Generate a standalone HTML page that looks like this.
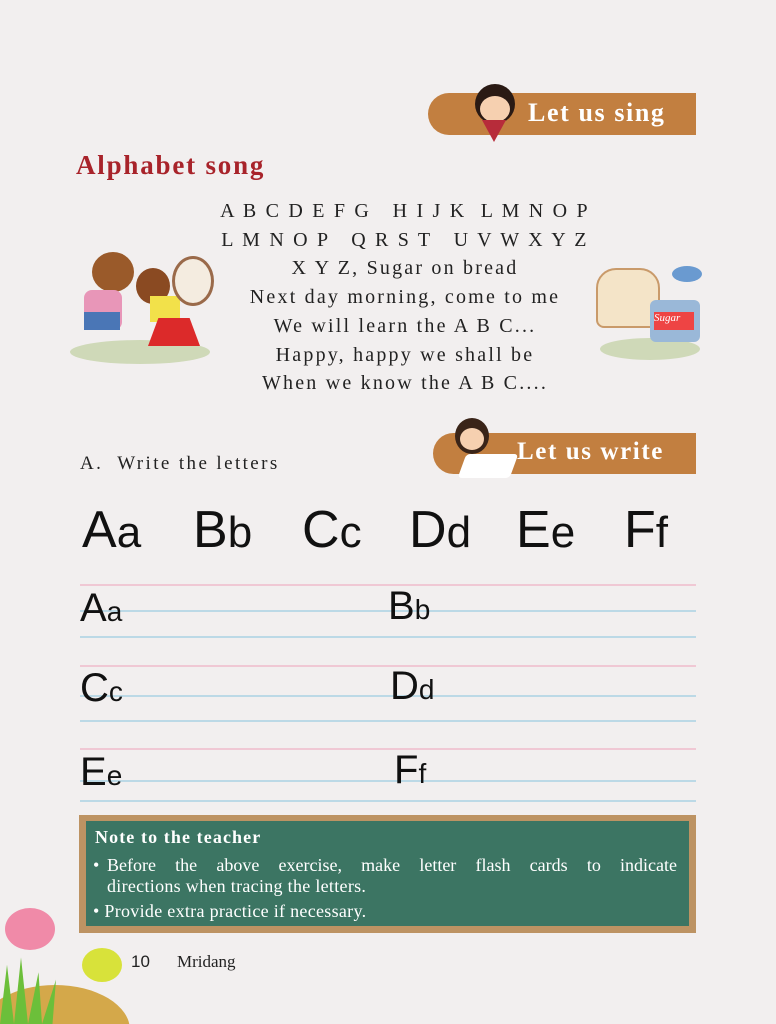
<!DOCTYPE html>
<html style="overflow:hidden;height:1024px"><head><meta charset="utf-8"><style>
html,body{overflow:hidden}
body{margin:0;width:776px;height:1024px;background:#f2efef;position:relative;overflow:hidden;font-family:"Liberation Serif",serif;color:#222}
.a{position:absolute}
.tag{position:absolute;background:#c27f40;color:#fff;font-weight:bold;font-family:"Liberation Serif",serif;border-radius:22px 0 0 22px;letter-spacing:1.6px}
.song{position:absolute;left:160px;width:490px;text-align:center;font-size:20px;letter-spacing:2.2px;line-height:28.7px;top:197px;color:#222}
.big{position:absolute;top:500px;font-family:"Liberation Sans",sans-serif;font-size:52px;color:#111}
.big small{font-size:44px}
.ln{position:absolute;left:80px;width:616px;height:1.5px}
.p{background:#f0c8d4}.b{background:#bcd9e6}
.w{position:absolute;font-family:"Liberation Sans",sans-serif;color:#111;font-size:40px;line-height:40px}
.w small{font-size:28px}
</style></head><body>
<div class="tag" style="left:428px;top:93px;width:268px;height:42px;"><span style="position:absolute;left:100px;top:5px;font-size:26px">Let us sing</span></div>
<div class="a" style="left:475px;top:84px;width:40px;height:40px;border-radius:50%;background:#2a1a14"></div>
<div class="a" style="left:480px;top:96px;width:30px;height:26px;border-radius:50%;background:#f6d0b0"></div>
<div class="a" style="left:482px;top:120px;width:24px;height:22px;background:#b72c3a;clip-path:polygon(0 0,100% 0,50% 100%)"></div>
<div class="a" style="left:76px;top:150px;font-size:27px;letter-spacing:1.8px;font-weight:bold;color:#a8232a">Alphabet song</div>
<div class="song">A B C D E F G &nbsp;&nbsp;H I J K &nbsp;L M N O P<br>L M N O P &nbsp;&nbsp;Q R S T &nbsp;&nbsp;U V W X Y Z<br>X Y Z, Sugar on bread<br>Next day morning, come to me<br>We will learn the A B C...<br>Happy, happy we shall be<br>When we know the A B C....</div>
<div class="a" style="left:70px;top:340px;width:140px;height:24px;border-radius:50%;background:#cfd9b8"></div>
<div class="a" style="left:92px;top:252px;width:42px;height:40px;border-radius:50%;background:#9a5a2a"></div>
<div class="a" style="left:84px;top:290px;width:38px;height:40px;background:#e896b8;border-radius:8px"></div>
<div class="a" style="left:84px;top:312px;width:36px;height:18px;background:#4a76b6"></div>
<div class="a" style="left:136px;top:268px;width:34px;height:36px;border-radius:50%;background:#8a4a22"></div>
<div class="a" style="left:150px;top:296px;width:30px;height:26px;background:#f2e14a"></div>
<div class="a" style="left:148px;top:318px;width:52px;height:28px;background:#dc2a2a;clip-path:polygon(20% 0,80% 0,100% 100%,0 100%)"></div>
<div class="a" style="left:172px;top:256px;width:36px;height:44px;border-radius:50%;background:#f4ece0;border:3px solid #9a6a4a"></div>
<div class="a" style="left:600px;top:338px;width:100px;height:22px;border-radius:50%;background:#cfd9b8"></div>
<div class="a" style="left:596px;top:268px;width:60px;height:56px;background:#f4e4c8;border:2px solid #c99a6a;border-radius:20px 20px 8px 8px"></div>
<div class="a" style="left:650px;top:300px;width:50px;height:42px;background:#9ab8d8;border-radius:6px"></div>
<div class="a" style="left:654px;top:312px;width:40px;height:18px;background:#e44;color:#fff;font-size:11px;font-style:italic">Sugar</div>
<div class="a" style="left:672px;top:266px;width:30px;height:16px;background:#6a9ad0;border-radius:50%"></div>
<div class="tag" style="left:433px;top:433px;width:263px;height:41px;"><span style="position:absolute;left:84px;top:5px;font-size:25px">Let us write</span></div>
<div class="a" style="left:455px;top:418px;width:34px;height:36px;border-radius:50%;background:#3a2418"></div>
<div class="a" style="left:460px;top:428px;width:24px;height:22px;border-radius:50%;background:#f6d0b0"></div>
<div class="a" style="left:462px;top:454px;width:52px;height:24px;background:#fff;border-radius:4px;transform:skewX(-20deg)"></div>
<div class="a" style="left:80px;top:453px;font-size:19px;letter-spacing:2.4px">A.&nbsp; Write the letters</div>
<div class="big" style="left:82px">A<small>a</small></div>
<div class="big" style="left:193px">B<small>b</small></div>
<div class="big" style="left:302px">C<small>c</small></div>
<div class="big" style="left:409px">D<small>d</small></div>
<div class="big" style="left:516px">E<small>e</small></div>
<div class="big" style="left:624px">F<small>f</small></div>
<div class="ln p" style="top:584px"></div><div class="ln b" style="top:610px"></div><div class="ln b" style="top:636px"></div>
<div class="ln p" style="top:665px"></div><div class="ln b" style="top:695px"></div><div class="ln b" style="top:720px"></div>
<div class="ln p" style="top:748px"></div><div class="ln b" style="top:780px"></div><div class="ln b" style="top:800px"></div>
<div class="w" style="left:80px;top:588px">A<small>a</small></div>
<div class="w" style="left:388px;top:586px">B<small>b</small></div>
<div class="w" style="left:80px;top:668px">C<small>c</small></div>
<div class="w" style="left:390px;top:666px">D<small>d</small></div>
<div class="w" style="left:80px;top:752px">E<small>e</small></div>
<div class="w" style="left:394px;top:750px">F<small>f</small></div>
<div class="a" style="left:79px;top:815px;width:617px;height:118px;background:#bd9363"></div>
<div class="a" style="left:86px;top:821px;width:603px;height:105px;background:#3c7563;color:#fff;font-size:18px;line-height:22px">
<div style="position:absolute;left:9px;top:5px;font-weight:bold;letter-spacing:1.1px">Note to the teacher</div>
<div style="position:absolute;left:7px;top:33px">•</div>
<div style="position:absolute;left:21px;top:33px;width:570px;text-align:justify;text-align-last:justify">Before the above exercise, make letter flash cards to indicate</div>
<div style="position:absolute;left:21px;top:54px;letter-spacing:0.3px">directions when tracing the letters.</div>
<div style="position:absolute;left:7px;top:79px;letter-spacing:0.3px">• Provide extra practice if necessary.</div>
</div>
<div class="a" style="left:-20px;top:985px;width:150px;height:90px;border-radius:50%;background:#d4a84a"></div>
<div class="a" style="left:0;top:950px;width:70px;height:74px;background:#6cbf3a;clip-path:polygon(0 100%,10% 20%,20% 100%,30% 10%,40% 100%,55% 30%,60% 100%,80% 40%,75% 100%)"></div>
<div class="a" style="left:5px;top:908px;width:50px;height:42px;background:#f08aa8;border-radius:50%"></div>
<div class="a" style="left:82px;top:948px;width:40px;height:34px;background:#d8e23a;border-radius:50%"></div>
<div class="a" style="left:131px;top:952px;font-family:'Liberation Sans',sans-serif;font-size:17px">10</div>
<div class="a" style="left:177px;top:952px;font-size:17px">Mridang</div>
</body></html>
